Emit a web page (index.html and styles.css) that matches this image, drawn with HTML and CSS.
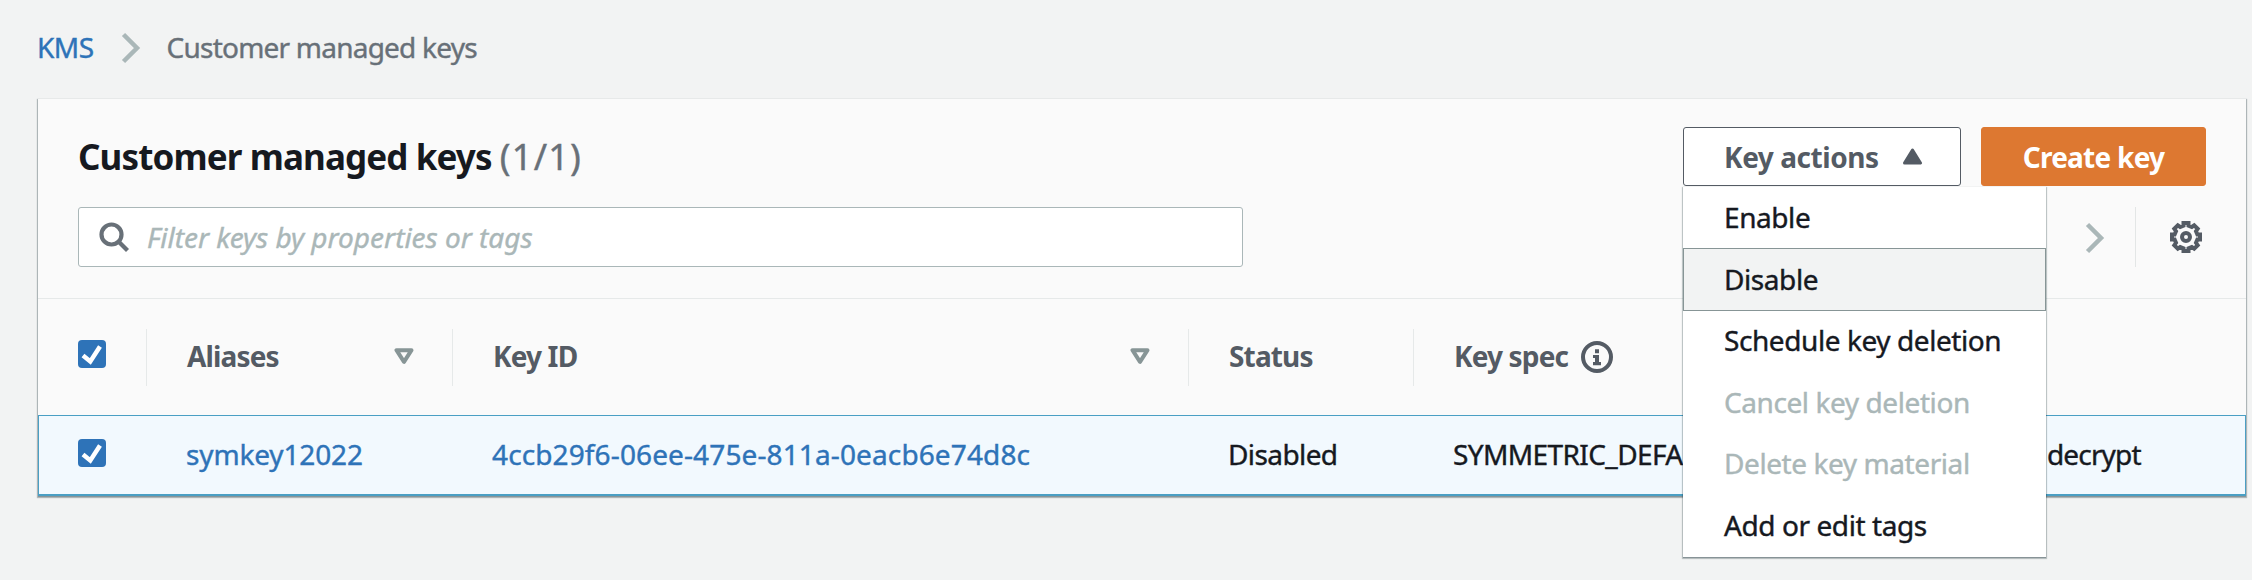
FILE: index.html
```html
<!DOCTYPE html>
<html lang="en">
<head>
<meta charset="utf-8">
<title>Customer managed keys</title>
<link rel="stylesheet" href="styles.css">
</head>
<body>
<nav class="breadcrumb">
  <a class="crumb-link">KMS</a>
  <svg class="chevron" width="20" height="32" viewBox="0 0 20 32"><path d="M2.500 2.500 16 16 2.500 29.500"/></svg>
  <span class="crumb-current">Customer managed keys</span>
</nav>

<main class="panel">
  <header class="panel-head">
    <div class="title-row">
      <h1 class="title">Customer managed keys <span class="count">(1/1)</span></h1>
      <div class="actions">
        <div class="dropdown">
          <button class="btn btn-normal">Key actions
            <svg class="caret" width="21" height="17" viewBox="0 0 21 17"><path d="M10.500 2 18.500 15H2.500Z"/></svg>
          </button>
          <ul class="menu">
            <li class="item">Enable</li>
            <li class="item active">Disable</li>
            <li class="item">Schedule key deletion</li>
            <li class="item off">Cancel key deletion</li>
            <li class="item off">Delete key material</li>
            <li class="item">Add or edit tags</li>
          </ul>
        </div>
        <button class="btn btn-primary">Create key</button>
      </div>
    </div>
    <div class="filter-row">
      <div class="search">
        <svg class="search-icon" width="31" height="31" viewBox="0 0 31 31"><circle cx="12.500" cy="12.500" r="10"/><path d="M19.500 19.500 28.500 28.500"/></svg>
        <span class="placeholder">Filter keys by properties or tags</span>
      </div>
      <div class="tools">
        <svg class="chevron" width="20" height="32" viewBox="0 0 20 32"><path d="M2.500 2.500 16 16 2.500 29.500"/></svg>
        <span class="tool-sep"></span>
        <svg class="gear" width="32" height="32" viewBox="0 0 32 32"><path d="M13.500 2H18.500V4.600L21.800 6 24.200 4.300 27.700 7.800 26 10.200 27.400 13.500H30V18.500H27.400L26 21.800 27.700 24.200 24.200 27.700 21.800 26 18.500 27.400V30H13.500V27.400L10.200 26 7.800 27.700 4.300 24.200 6 21.800 4.600 18.500H2V13.500H4.600L6 10.200 4.300 7.800 7.800 4.300 10.200 6 13.500 4.600Z"/><circle cx="16" cy="16" r="4"/></svg>
      </div>
    </div>
  </header>

  <div class="grid head">
    <div class="cell"><span class="check"><svg width="28" height="28" viewBox="0 0 28 28"><path d="M5 15.500 12.300 21.500 22 6.500"/></svg></span></div>
    <div class="cell">Aliases <svg class="sort" width="20" height="16" viewBox="0 0 20 16"><path d="M2.500 2.200H17.500L10 13.800Z"/></svg></div>
    <div class="cell">Key ID <svg class="sort" width="20" height="16" viewBox="0 0 20 16"><path d="M2.500 2.200H17.500L10 13.800Z"/></svg></div>
    <div class="cell">Status</div>
    <div class="cell spec">Key spec <svg class="info" width="32" height="32" viewBox="0 0 32 32"><circle cx="16" cy="16" r="14"/><path d="M14 8.300h4v4h-4zM12 14h6v7h2v3.200h-8V21h2v-4h-2z"/></svg></div>
  </div>
  <div class="grid row">
    <div class="cell"><span class="check"><svg width="28" height="28" viewBox="0 0 28 28"><path d="M5 15.500 12.300 21.500 22 6.500"/></svg></span></div>
    <div class="cell link alias">symkey12022</div>
    <div class="cell link keyid">4ccb29f6-06ee-475e-811a-0eacb6e74d8c</div>
    <div class="cell">Disabled</div>
    <div class="cell">SYMMETRIC_DEFA</div>
    <div class="cell usage">decrypt</div>
  </div>
</main>
</body>
</html>
```
FILE: styles.css
```css
* { box-sizing: border-box; }

body {
  margin: 0;
  height: 580px;
  overflow: hidden;
  background: #f2f3f3;
  color: #16191f;
  font: 28px/40px "Noto Sans", "Open Sans", sans-serif;
  -webkit-text-stroke: 0.4px;
}

svg { display: block; flex: none; fill: none; }

.breadcrumb {
  display: flex;
  align-items: center;
  height: 99px;
  padding: 0 0 5px 37px;
}
.crumb-link, .link { color: #2e73b8; }
.crumb-link { letter-spacing: -0.5px; }
.breadcrumb .chevron { margin: 2px 26px 0 27px; }
.crumb-current { color: #687078; letter-spacing: -0.78px; }
.chevron path { stroke: #aab7b8; stroke-width: 4.5; }

.panel {
  width: 2208px;
  margin-left: 38px;
  background: #fafafa;
  box-shadow: 0 1px 1px 1px rgba(0, 28, 36, .25), 0 1px 1px rgba(0, 28, 36, .25);
}

.panel-head {
  height: 200px;
  padding: 28px 40px 0;
  border-bottom: 1px solid #e6e9e9;
}
.title-row { display: flex; justify-content: space-between; height: 60px; }
.title {
  margin: 0;
  font-size: 35px;
  line-height: 60px;
  letter-spacing: -0.88px;
  -webkit-text-stroke: 0;
}
.count { font-size: 36px; font-weight: 400; color: #687078; letter-spacing: 1.2px; -webkit-text-stroke: 0.4px; }

.actions { display: flex; gap: 20px; }
.dropdown { position: relative; }
.btn {
  display: flex;
  align-items: center;
  height: 59px;
  padding: 0 0 0 40px;
  border: 1px solid #545b64;
  border-radius: 3px;
  font: 700 28px/40px "Noto Sans", "Open Sans", sans-serif;
  letter-spacing: -0.45px;
  -webkit-text-stroke: 0;
}
.btn-normal { width: 278px; background: #fff; color: #545b64; gap: 23px; }
.btn-primary {
  width: 225px;
  justify-content: center;
  padding-left: 0;
  background: #dd7831;
  border-color: #dd7831;
  color: #fff;
  letter-spacing: -0.75px;
}
.caret path { fill: #545b64; stroke: #545b64; stroke-width: 3; stroke-linejoin: round; }

.menu {
  position: absolute;
  z-index: 2;
  top: 60px;
  left: 0;
  width: 363px;
  margin: 0;
  padding: 0 0 1px;
  list-style: none;
  background: #fff;
  box-shadow: 0 1px 1px 1px rgba(0, 28, 36, .2), 0 1px 1px rgba(0, 28, 36, .3);
}
.item {
  height: 61.5px;
  padding-left: 41px;
  line-height: 60px;
  letter-spacing: -0.42px;
}
.item.active {
  height: 63px;
  margin: -0.5px 0 -1px;
  line-height: 62px;
  background: #f2f3f3;
  outline: 1px solid #879596;
  outline-offset: -1px;
}
.off { color: #aab7b8; }

.filter-row { display: flex; justify-content: space-between; margin-top: 20px; }
.search {
  display: flex;
  align-items: center;
  width: 1165px;
  height: 60px;
  padding-left: 20px;
  background: #fff;
  border: 1px solid #aab7b8;
  border-radius: 3px;
}
.search-icon { margin-right: 17px; }
.search-icon circle, .search-icon path { stroke: #687078; stroke-width: 4.2; }
.placeholder { color: #aab7b8; font-style: italic; letter-spacing: -0.02px; }
.tools { display: flex; align-items: center; padding-right: 4px; }
.tools .chevron { margin-top: 1px; }
.tool-sep { width: 1px; height: 60px; margin: 0 34px 0 30px; background: #e3e6e6; }
.gear path, .gear circle { stroke: #545b64; stroke-width: 4; }

.grid { display: grid; grid-template-columns: 108px 306px 736px 225px 594px 1fr; }
.cell { display: flex; align-items: center; padding-left: 40px; white-space: nowrap; letter-spacing: -0.6px; }
.head { height: 116px; align-items: center; font-weight: 700; color: #545b64; -webkit-text-stroke: 0; }
.head .cell { height: 57px; letter-spacing: -0.85px; padding-bottom: 3px; }
.head .cell + .cell { border-left: 1px solid #e6e9e9; }
.sort { margin: 1px 38px 0 auto; }
.sort path { stroke: #879596; stroke-width: 4; stroke-linejoin: round; }
.info { margin: 2px 0 0 13px; }
.info circle { stroke: #545b64; stroke-width: 4; }
.info path { fill: #545b64; }

.check { width: 28px; height: 28px; border-radius: 4px; background: #2e73b8; }
.head .check { margin-top: -3px; }
.row .check { margin-top: -2px; }
.check path { stroke: #fff; stroke-width: 4.5; }

.row {
  height: 81px;
  background: #f2f9fe;
  border: solid #4a9fc4;
  border-width: 1px 1px 2px;
}
.row .cell { padding-left: 39px; padding-bottom: 2px; }
.row .alias { letter-spacing: -0.15px; }
.row .keyid { letter-spacing: 0.12px; }
.row .usage { letter-spacing: -0.85px; }
```
